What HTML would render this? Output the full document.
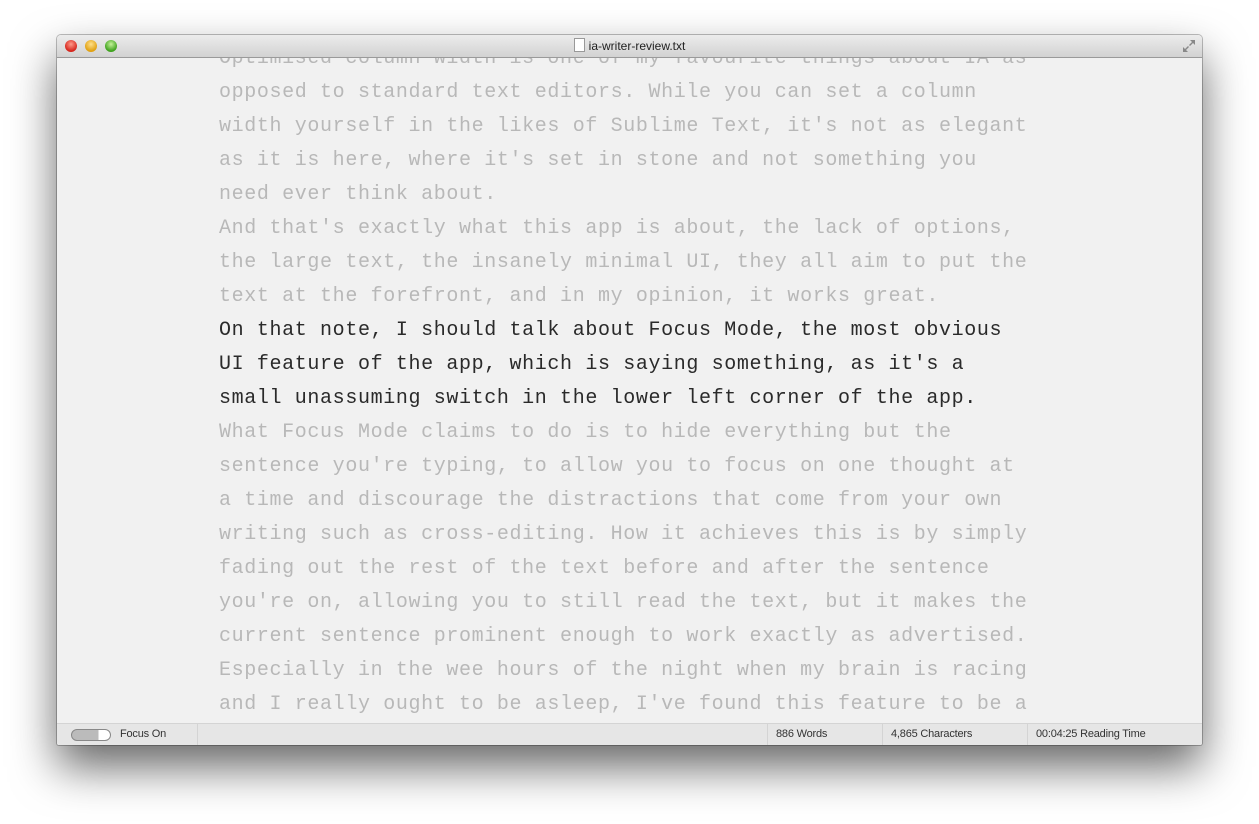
<!DOCTYPE html>
<html><head><meta charset="utf-8"><style>
html,body{margin:0;padding:0;width:1259px;height:824px;background:#fff;overflow:hidden;font-family:"Liberation Sans",sans-serif}
.win{position:absolute;left:57px;top:35px;width:1145px;height:710px;background:#f1f1f1;border-radius:4px 4px 2px 2px;box-shadow:0 22px 45px rgba(0,0,0,.6),0 0 0 1px rgba(0,0,0,.25);overflow:hidden}
.title{position:absolute;left:0;top:0;width:100%;height:22px;background:linear-gradient(#ececec,#d2d2d2);border-bottom:1px solid #9a9a9a;z-index:2;text-align:center;font-size:12px;line-height:22px;color:#222}
.dot{position:absolute;top:5px;width:12px;height:12px;border-radius:50%}
.content{position:absolute;left:0;top:22px;width:100%;height:666px;overflow:hidden}
.txt{position:absolute;left:162px;top:-15px;font-family:"Liberation Mono",monospace;font-size:20px;letter-spacing:.63px;line-height:34px;color:#b8b8b8;white-space:pre}
.txt .d{color:#2a2a2a}
.status{position:absolute;left:0;bottom:0;width:100%;height:21px;background:#e6e6e6;border-top:1px solid #d4d4d4;font-size:11px;color:#333;line-height:21px;letter-spacing:-.2px}
.status span{position:absolute;top:0;height:21px}
.sep{border-left:1px solid #d4d4d4}
</style></head><body>
<div class="win">
 <div class="title">
  <div class="dot" style="left:8px;background:radial-gradient(circle at 50% 35%,#ff9a8a,#d5241b 70%)"></div>
  <div class="dot" style="left:28px;background:radial-gradient(circle at 50% 35%,#ffe08a,#e0a010 70%)"></div>
  <div class="dot" style="left:48px;background:radial-gradient(circle at 50% 35%,#c5f29a,#3da11c 70%)"></div>
  <span style="display:inline-block;width:9px;height:12px;background:#fff;border:1px solid #999;vertical-align:-2px;margin-right:4px"></span>ia-writer-review.txt
  <svg style="position:absolute;right:6px;top:4px" width="14" height="14" viewBox="0 0 14 14"><path d="M8 1h5v5l-2-2-3 3-1-1 3-3zM6 13H1V8l2 2 3-3 1 1-3 3z" fill="#888"/></svg>
 </div>
 <div class="content"><div class="txt">Optimised column width is one of my favourite things about IA as
opposed to standard text editors. While you can set a column
width yourself in the likes of Sublime Text, it's not as elegant
as it is here, where it's set in stone and not something you
need ever think about.
And that's exactly what this app is about, the lack of options,
the large text, the insanely minimal UI, they all aim to put the
text at the forefront, and in my opinion, it works great.
<span class="d">On that note, I should talk about Focus Mode, the most obvious
UI feature of the app, which is saying something, as it's a
small unassuming switch in the lower left corner of the app.</span>
What Focus Mode claims to do is to hide everything but the
sentence you're typing, to allow you to focus on one thought at
a time and discourage the distractions that come from your own
writing such as cross-editing. How it achieves this is by simply
fading out the rest of the text before and after the sentence
you're on, allowing you to still read the text, but it makes the
current sentence prominent enough to work exactly as advertised.
Especially in the wee hours of the night when my brain is racing
and I really ought to be asleep, I've found this feature to be a</div></div>
 <div class="status">
  <span style="left:14px;top:5px;width:38px;height:10px;border:1px solid #888;border-radius:6px;background:linear-gradient(90deg,#bbb 70%,#fff 70%)"></span>
  <span style="left:63px">Focus On</span>
  <span class="sep" style="left:140px"></span>
  <span class="sep" style="left:710px;padding-left:8px">886 Words</span>
  <span class="sep" style="left:825px;padding-left:8px">4,865 Characters</span>
  <span class="sep" style="left:970px;padding-left:8px">00:04:25 Reading Time</span>
 </div>
</div>
</body></html>
